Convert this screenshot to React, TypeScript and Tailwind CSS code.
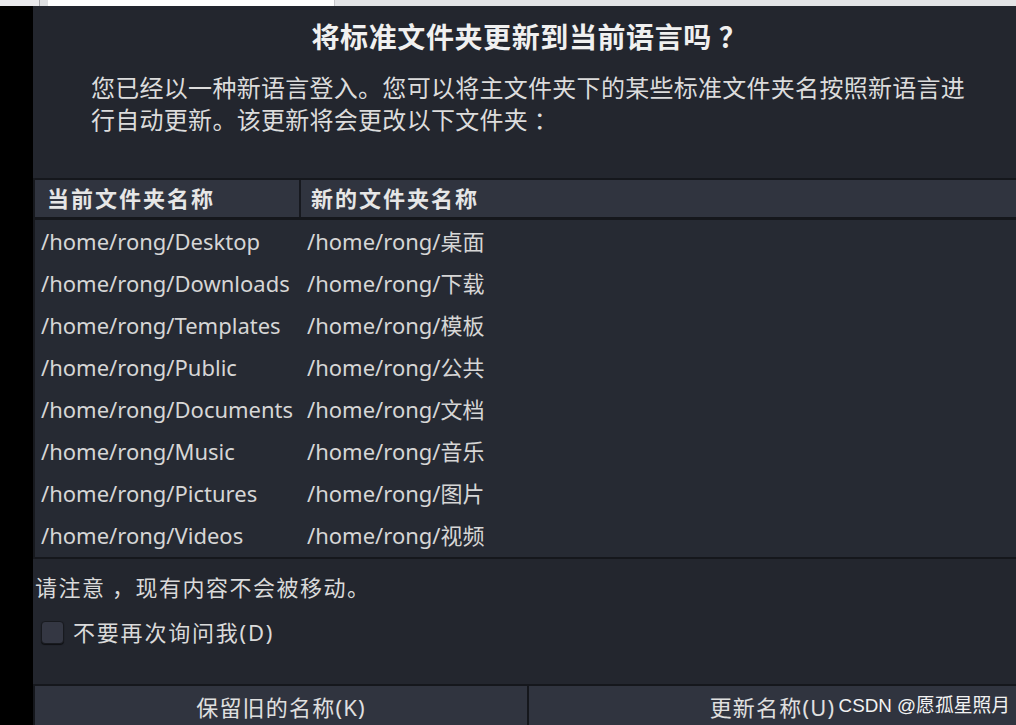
import React from 'react';

const ROWS: [string, string][] = [
  ['/home/rong/Desktop', '/home/rong/桌面'],
  ['/home/rong/Downloads', '/home/rong/下载'],
  ['/home/rong/Templates', '/home/rong/模板'],
  ['/home/rong/Public', '/home/rong/公共'],
  ['/home/rong/Documents', '/home/rong/文档'],
  ['/home/rong/Music', '/home/rong/音乐'],
  ['/home/rong/Pictures', '/home/rong/图片'],
  ['/home/rong/Videos', '/home/rong/视频'],
];

const FONT = { fontFamily: '"Noto Sans", "Noto Sans CJK SC", sans-serif' };
const CJK = { fontFamily: '"Noto Sans CJK SC", "Noto Sans", sans-serif' };

export default function App() {
  return (
    <div className="w-[1016px] h-[725px] overflow-hidden bg-black flex flex-col relative" style={FONT}>
      {/* browser strip at the top */}
      <div className="h-[6px] flex shrink-0">
        <div className="w-[39px] bg-[#e9e9eb]" />
        <div className="w-px bg-[#a9a9ad]" />
        <div className="w-[8px] bg-[#dfe0e2]" />
        <div className="w-[286px] bg-white" />
        <div className="w-px bg-[#c9c9cc]" />
        <div className="flex-1 bg-[#e3e4e6]" />
      </div>

      <div className="flex flex-1 min-h-0">
        <div className="w-[33px] bg-black shrink-0" />

        <div className="flex-1 bg-[#23262e] flex flex-col">
          <h1
            className="mt-[12px] pl-[10px] h-[36px] leading-[36px] text-center text-[28px] font-bold text-[#f0f0f0] tracking-[0.6px]"
            style={CJK}
          >
            将标准文件夹更新到当前语言吗 ？
          </h1>
          <p
            className="mt-[17px] pl-[58px] w-[948px] text-[24px] leading-[32px] text-[#dcdcdc] tracking-[0.28px]"
            style={CJK}
          >
            您已经以一种新语言登入。您可以将主文件夹下的某些标准文件夹名按照新语言进行自动更新。该更新将会更改以下文件夹 ：
          </p>

          {/* table */}
          <div className="mt-[43px] border-l-2 border-[#17191e]">
            <div className="flex bg-[#30343f] border-t-2 border-b-[3px] border-[#15171c] h-[42px] items-center text-[22px] font-bold text-[#e6e6e6] tracking-[2px]">
              <div className="w-[264px] pl-[12px] h-full flex items-center">当前文件夹名称</div>
              <div className="w-[2px] h-full bg-[#17191f]" />
              <div className="flex-1 pl-[10px] h-full flex items-center">新的文件夹名称</div>
            </div>
            <div className="bg-[#262a33] border-b-2 border-[#15171c] pb-px">
              {ROWS.map(([cur, next]) => (
                <div key={cur} className="flex h-[42px] items-center text-[22px] text-[#d6d6d6]">
                  <div className="w-[266px] pl-[6px] whitespace-nowrap">{cur}</div>
                  <div className="flex-1 pl-[6px] whitespace-nowrap">{next}</div>
                </div>
              ))}
            </div>
          </div>

          <p className="mt-[11px] pl-[2px] text-[22px] leading-[32px] text-[#dadada] tracking-[1.5px]" style={CJK}>
            请注意 ，现有内容不会被移动。
          </p>

          <label className="mt-[14px] ml-[8px] flex items-center gap-[9px] h-[32px] text-[22px] text-[#dadada] tracking-[1.8px]">
            <span className="w-[23px] h-[23px] rounded-[4px] bg-[#343743] border border-[#181a1f] shadow-[0_1px_1px_rgba(0,0,0,0.6)]" />
            不要再次询问我(D)
          </label>

          <div className="mt-[36px] flex flex-1 border-t-2 border-l-2 border-[#15171c]">
            <div className="w-[492px] bg-[#30343f] flex justify-center pt-[5px] text-[22px] text-[#e0e0e0] tracking-[1.2px]">
              保留旧的名称(K)
            </div>
            <div className="w-[2px] bg-[#15171c]" />
            <div className="flex-1 bg-[#30343f] flex justify-center pt-[5px] text-[22px] text-[#e0e0e0] tracking-[1.2px]">
              更新名称(U)
            </div>
          </div>
        </div>
      </div>

      <div
        className="absolute right-[6px] bottom-[7px] text-[18.8px] leading-[24px] text-[#f2f2f2]"
        style={{ fontFamily: '"Liberation Sans", "Noto Sans CJK SC", sans-serif' }}
      >
        CSDN @愿孤星照月
      </div>
    </div>
  );
}
